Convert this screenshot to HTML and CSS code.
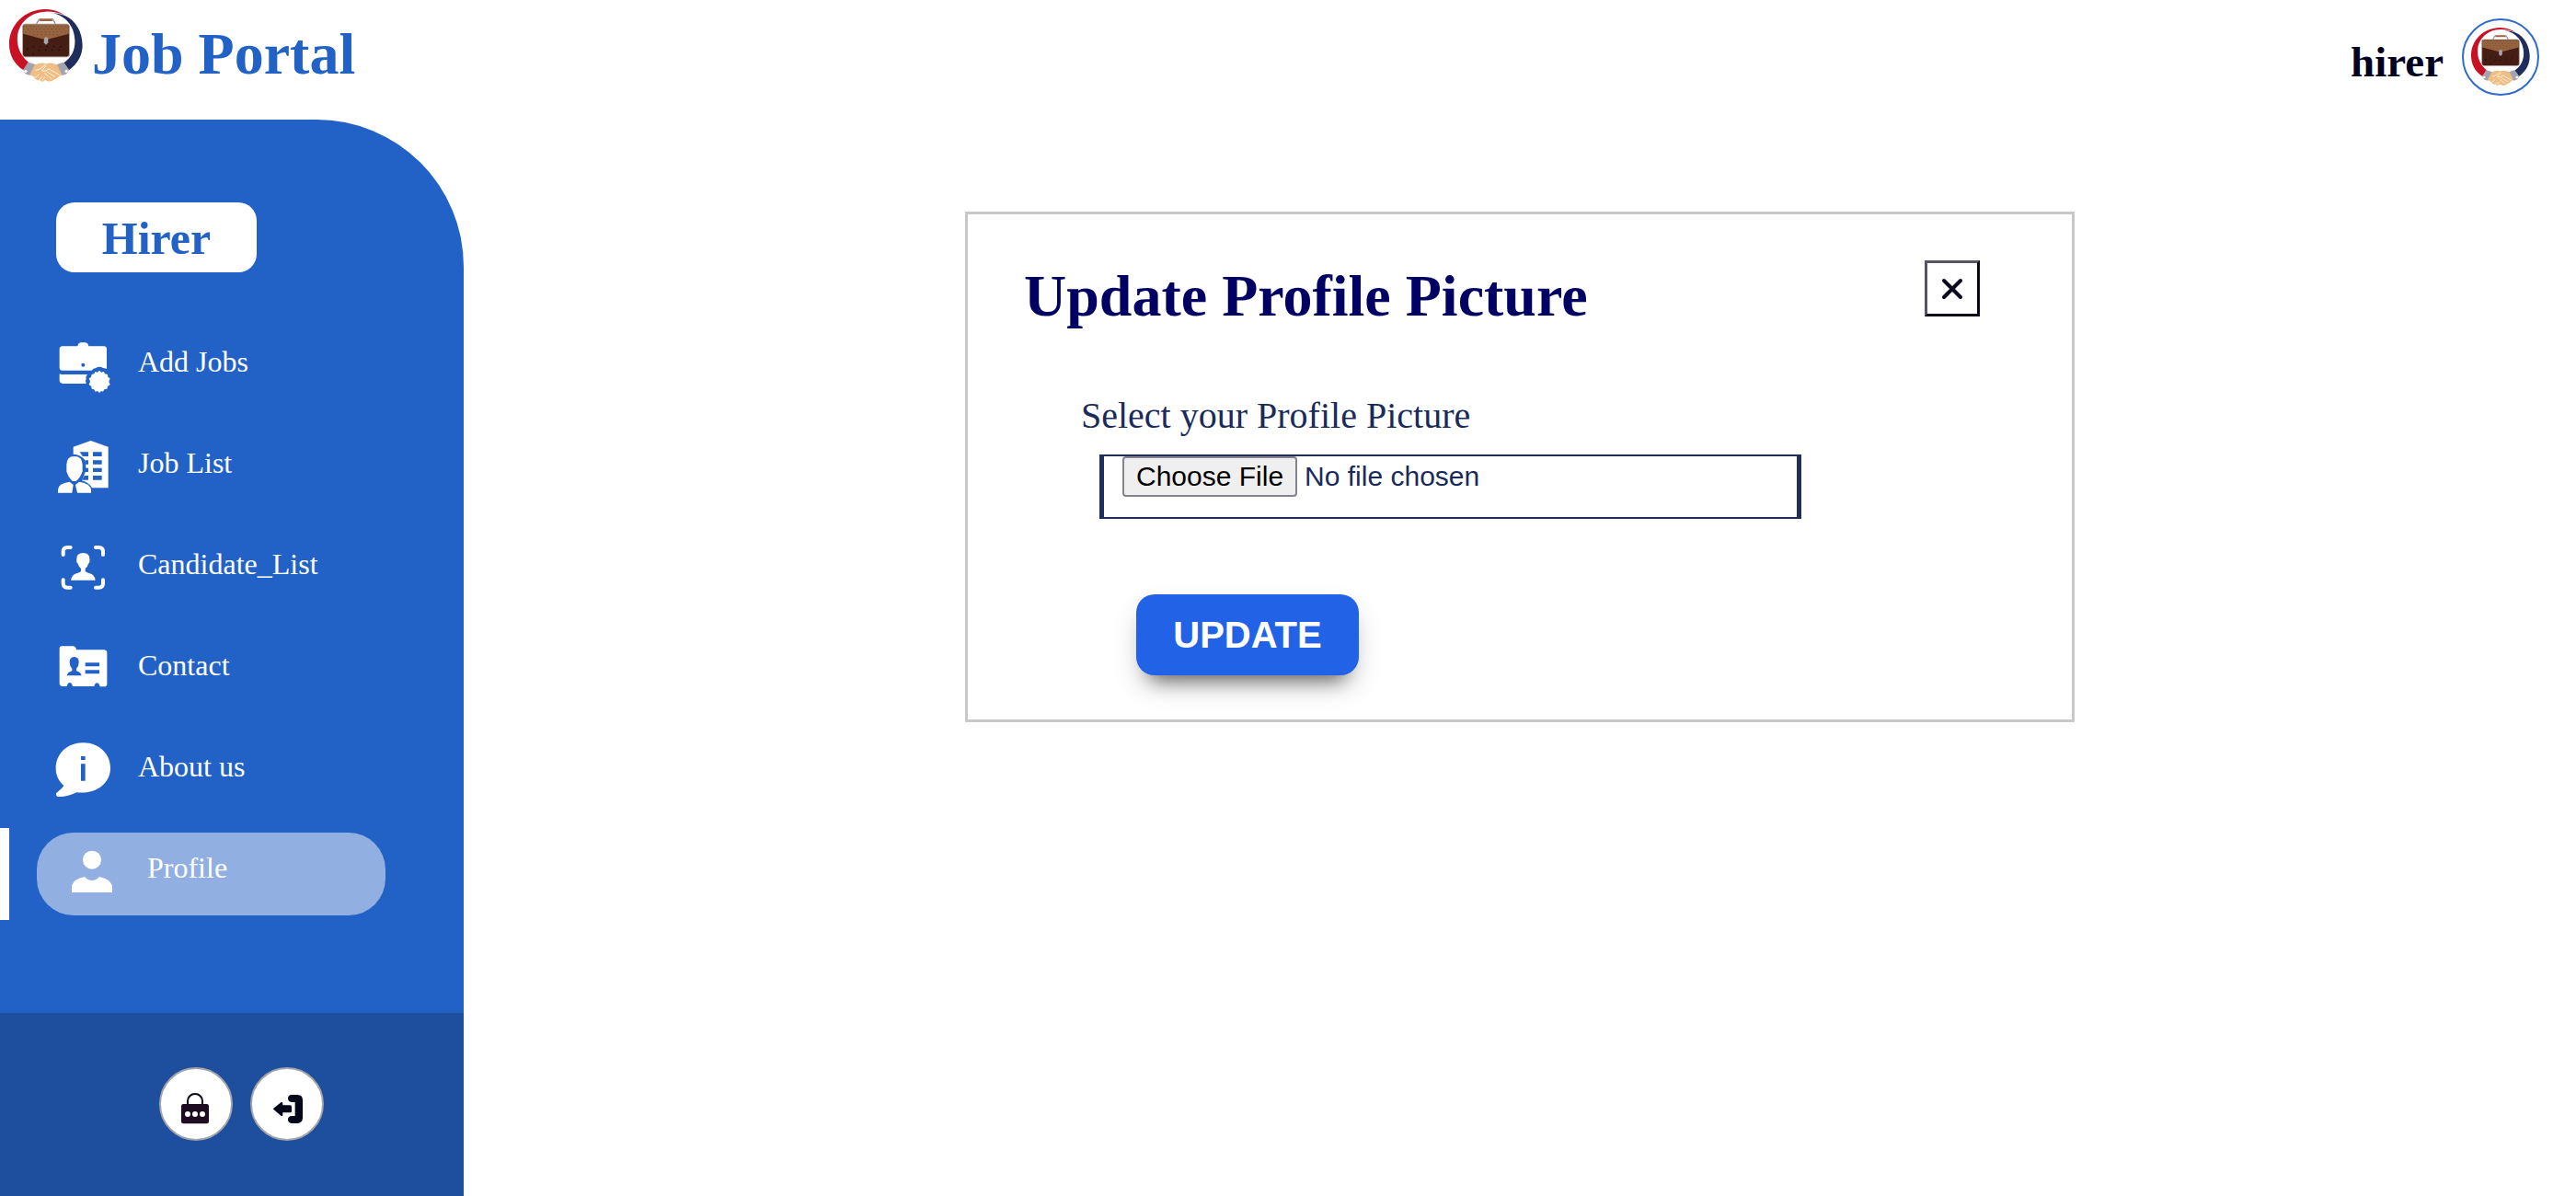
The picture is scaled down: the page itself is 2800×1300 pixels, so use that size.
FILE: index.html
```html
<!DOCTYPE html>
<html lang="en">
<head>
<meta charset="utf-8">
<meta name="viewport" content="width=device-width, initial-scale=1">
<title>Job Portal</title>
<link rel="stylesheet" href="styles.css">
</head>
<body>
<svg class="defs" aria-hidden="true">
  <symbol id="logo" viewBox="30 29 242 242">
    <path fill="#c81124" d="M150 29C80 29 30 82 30 143C30 180 46 208 76 229L94 204C66 182 55 152 57 120C60 75 98 38 150 37Q182 36 212 49Q186 30 150 29Z"/>
    <path fill="#1e2d5c" d="M168 41C215 48 246 86 246 134C246 164 236 186 209 206L227 229C257 207 271 178 271 147C270 104 250 66 213 50Q190 41 168 41Z"/>
    <path fill="#a0623a" d="M131 60H170L173 68H129Z"/>
    <path fill="none" stroke="#8e909c" stroke-width="4" d="M119 79L127 64Q129 61 133 61M183 79L175 64Q173 61 169 61"/>
    <rect x="74" y="78" width="154" height="108" rx="9" fill="#461d13" stroke="#b9aaa8" stroke-width="3"/>
    <path fill="#99633e" d="M83 80H219Q226 81 226 88V110L160 127H141L76 110V88Q76 81 83 80Z"/>
    <g fill="none" stroke="#545052" stroke-width="3" stroke-linecap="round" stroke-dasharray="1 12">
      <path d="M86 86H220M92 95H220M84 104H220M110 113H194"/>
    </g>
    <path fill="none" stroke="#090f20" stroke-width="4" stroke-dasharray="4 18" d="M88 161L112 152H210M108 177L130 163H210"/>
    <path fill="#a6a6ae" d="M145 124L151 120L158 124V139L151 146L144 139Z"/>
    <path fill="#a3a3ad" d="M92 203L119 212L101 246Q82 248 76 229Z"/>
    <path fill="#a3a3ad" d="M209 203L183 212L201 246Q220 248 227 229Z"/>
    <circle cx="84" cy="233" r="5" fill="#fff"/><circle cx="218" cy="233" r="5" fill="#fff"/>
    <path fill="#efbd85" d="M98 243L114 212Q134 203 151 208Q169 203 188 212L203 243Q190 256 174 263Q161 271 149 262Q137 273 130 262Q116 264 113 253Z"/>
    <path fill="none" stroke="#fff5d9" stroke-width="3" d="M117 230L132 225L151 211M151 216L137 232H151L160 225L195 245M153 234L181 251M145 239L170 259M138 251L129 262M128 243L115 254M147 251L139 264"/>
  </symbol>
</svg>

<header class="topbar">
  <a class="brand" href="#">
    <svg class="brand-logo" aria-hidden="true"><use href="#logo"/></svg>
    <span>Job Portal</span>
  </a>
  <a class="account" href="#">
    <span>hirer</span>
    <span class="avatar"><svg aria-hidden="true"><use href="#logo"/></svg></span>
  </a>
</header>

<div class="layout">
  <aside class="sidebar">
    <h2 class="role">Hirer</h2>
    <nav>
      <ul class="menu">
        <li><a href="#">
          <svg viewBox="60 57 180 180" aria-hidden="true">
            <path d="M83 79H133Q135 67 145 67H157Q167 67 169 79H219Q228 80 228 88V153Q221 150 216 150Q211 146 204 146Q197 146 193 150Q184 150 179 158H83Q74 157 74 149V88Q74 80 83 79Z"/>
            <path d="M74 169Q78 171 83 171H165Q158 180 161 186Q157 192 161 201H85Q74 200 74 190Z"/>
            <path d="M204 158L210 164L219 162L222 169L231 171L232 180L239 184L235 194L239 204L231 210L229 218L220 220L216 227L210 225L204 231L198 225L191 227L187 220L179 218L178 210L170 204L174 194L170 184L177 180L179 171L187 169L190 162L198 164Z"/>
            <circle class="cut" cx="151" cy="140" r="6"/>
          </svg><span>Add Jobs</span></a></li>
        <li><a href="#">
          <svg viewBox="60 387 180 180" aria-hidden="true">
            <path d="M119 407L176 387L233 407V541H180Q172 527 155 520L147 517L160 485Q161 463 157 451Q143 431 119 431Z"/>
            <path class="cut" d="M140 424H168V438H150ZM183 424H212V438H183ZM157 451H168V464H159ZM183 451H212V464H183ZM159 476H168V489H156ZM183 476H212V489H183ZM155 501H168V515H147ZM183 501H212V515H183Z"/>
            <path d="M122 438Q149 438 149 466V487Q141 510 128 519H117Q102 507 97 487V466Q97 438 122 438Z"/>
            <path d="M69 557V547Q69 526 107 521L119 531L115 557ZM132 557L126 531L138 521Q176 527 177 548V557Z"/>
          </svg><span>Job List</span></a></li>
        <li><a href="#">
          <svg viewBox="60 87 180 180" aria-hidden="true">
            <path class="stroke" d="M86 129V119Q86 105 100 105H110M192 105H202Q216 105 216 119V129M216 211V222Q216 236 202 236H192M110 236H100Q86 236 86 222V211"/>
            <path d="M151 123Q173 124 172 143Q174 154 168 158Q166 168 158 174V183Q162 187 173 190Q189 195 191 212H111Q114 195 129 190Q141 187 144 183V174Q137 168 134 158Q128 154 130 143Q129 124 151 123Z"/>
          </svg><span>Candidate_List</span></a></li>
        <li><a href="#">
          <svg viewBox="60 420 180 180" aria-hidden="true">
            <path d="M80 430H117Q128 431 129 442H220Q229 444 229 451V554Q228 562 220 562H206Q203 550 196 550Q190 550 187 561H117Q114 549 107 549Q101 549 98 561H84Q74 560 74 551V437Q74 431 80 430Z"/>
            <path class="cut" d="M122 465Q138 466 137 483Q137 495 129 503V511Q143 514 146 526H98Q101 514 115 511V503Q107 495 107 483Q106 466 122 465ZM158 484H204V496H158ZM158 508H204V520H158Z"/>
          </svg><span>Contact</span></a></li>
        <li><a href="#">
          <svg viewBox="180 87 180 180" aria-hidden="true">
            <path d="M271 82C325 82 360 120 360 164C360 216 312 250 250 244Q218 260 188 258Q182 255 183 247L201 231L208 222C192 207 182 190 182 166C182 119 219 82 271 82Z"/>
            <path class="cut" d="M264 126H278V138H264ZM264 151H278V206H264Z"/>
          </svg><span>About us</span></a></li>
        <li class="active"><a href="#" aria-current="page">
          <svg viewBox="210 417 180 180" aria-hidden="true">
            <circle cx="300" cy="464" r="30"/>
            <path d="M234 570V548Q241 526 276 519Q287 531 300 531Q313 531 324 519Q358 526 366 548V570Z"/>
          </svg><span>Profile</span></a></li>
      </ul>
    </nav>
    <div class="actions">
      <button type="button" aria-label="Change password">
        <svg viewBox="99 90 240 240" aria-hidden="true">
          <path fill="none" stroke="#090512" stroke-width="6" d="M192 212V199A24 22 0 0 1 240 199V212"/>
          <rect x="171" y="210" width="90" height="64" rx="7" fill="#1c0e20"/>
          <g fill="#fff"><circle cx="192" cy="243" r="9"/><circle cx="216" cy="243" r="9"/><circle cx="240" cy="243" r="9"/></g>
        </svg>
      </button>
      <button type="button" aria-label="Log out">
        <svg viewBox="396 90 240 240" aria-hidden="true">
          <path fill="#05061a" d="M470 226L496 205Q502 202 502 209V214H526Q531 215 531 219V234Q531 238 526 238H502V245Q502 251 496 248Z"/>
          <path fill="#05061a" d="M531 180H550Q567 181 567 197V256Q566 272 550 273H531Q519 272 519 261Q519 250 531 249H542V204H531Q519 203 519 192Q519 181 531 180Z"/>
        </svg>
      </button>
    </div>
  </aside>

  <main class="content">
    <section class="dialog" aria-labelledby="dialog-title">
      <div class="dialog-head">
        <h1 id="dialog-title">Update Profile Picture</h1>
        <button class="close" type="button" aria-label="Close">
          <svg viewBox="0 0 20 20" aria-hidden="true"><path d="M1 1L19 19M19 1L1 19"/></svg>
        </button>
      </div>
      <form class="dialog-form">
        <label for="picture">Select your Profile Picture</label>
        <input id="picture" type="file">
        <button class="update" type="submit">UPDATE</button>
      </form>
    </section>
  </main>
</div>
</body>
</html>
```

FILE: styles.css
```css
* {
  box-sizing: border-box;
}

body {
  margin: 0;
  min-height: 100vh;
  display: flex;
  flex-direction: column;
  background: #fff;
  font-family: "Liberation Serif", "Times New Roman", serif;
}

a {
  color: inherit;
  text-decoration: none;
}

button {
  padding: 0;
  cursor: pointer;
}

svg {
  display: block;
  flex: none;
  overflow: visible;
}

.defs {
  position: absolute;
  width: 0;
  height: 0;
}

.topbar {
  display: flex;
  justify-content: space-between;
  align-items: flex-start;
  height: 130px;
  padding: 10px 40px 0 10px;
}

.brand {
  display: flex;
  gap: 10px;
  color: #2262c6;
  font-size: 64px;
  font-weight: bold;
  line-height: 98px;
}

.brand-logo {
  width: 80px;
  height: 80px;
}

.account {
  display: flex;
  gap: 20px;
  padding-top: 10px;
  color: #000020;
  font-size: 47px;
  font-weight: bold;
  line-height: 94px;
}

.avatar {
  display: grid;
  place-items: center;
  width: 84px;
  height: 84px;
  border: 2px solid #2f6cc9;
  border-radius: 50%;
}

.avatar svg {
  width: 64px;
  height: 64px;
}

.layout {
  flex: 1;
  display: flex;
}

.sidebar {
  flex: none;
  display: flex;
  flex-direction: column;
  width: 504px;
  padding-top: 90px;
  background: #2262c6;
  border-top-right-radius: 160px;
}

.role {
  width: 218px;
  height: 76px;
  margin: 0 0 54px 61px;
  border-radius: 20px;
  background: #fff;
  color: #2262c6;
  font-size: 50px;
  line-height: 78px;
  text-align: center;
}

.menu {
  display: flex;
  flex-direction: column;
  gap: 10px;
  margin: 0;
  padding: 0;
  list-style: none;
}

.menu li {
  padding: 5px 85px 5px 30px;
  border-left: 10px solid transparent;
}

.menu a {
  display: flex;
  gap: 30px;
  height: 90px;
  padding: 14px 20px;
  border-radius: 40px;
  color: #fff;
  font-size: 32px;
  line-height: 48px;
}

.menu svg {
  width: 60px;
  height: 60px;
  fill: #fff;
}

.menu .cut {
  fill: #2262c6;
}

.menu .stroke {
  fill: none;
  stroke: #fff;
  stroke-width: 12px;
  stroke-linecap: round;
}

.menu .active {
  border-left-color: #fff;
}

.menu .active a {
  padding-left: 30px;
  background: #91b0e1;
}

.actions {
  display: flex;
  gap: 19px;
  height: 199px;
  margin-top: auto;
  padding: 59px 0 0 173px;
  background: #1d4f9e;
}

.actions button {
  width: 80px;
  height: 80px;
  border: 2px solid #a3a3aa;
  border-radius: 50%;
  background: #fff;
}

.actions svg {
  width: 80px;
  height: 80px;
  margin: -2px;
}

.content {
  flex: 1;
  padding: 100px 20px;
}

.dialog {
  width: 1206px;
  max-width: 100%;
  margin: 0 auto;
  padding: 50px 100px 48px 61px;
  border: 3px solid #c8c8c8;
}

.dialog-head {
  display: flex;
  justify-content: space-between;
  align-items: flex-start;
}

.dialog h1 {
  margin: 0;
  color: #000064;
  font-size: 64px;
  line-height: 77px;
}

.close {
  display: grid;
  place-items: center;
  width: 60px;
  height: 61px;
  border: 3px solid #08081a;
  border-top-color: #565564;
  border-left-color: #565564;
  background: #fff;
}

.close svg {
  width: 20px;
  height: 20px;
  fill: none;
  stroke: #0a0a1c;
  stroke-width: 4px;
  stroke-linecap: round;
}

.dialog-form {
  display: flex;
  flex-direction: column;
  align-items: flex-start;
  padding: 68px 0 0 62px;
}

.dialog-form label {
  color: #1a2a5a;
  font-size: 40px;
  line-height: 48px;
}

.dialog-form input {
  width: 763px;
  max-width: 100%;
  height: 70px;
  margin: 18px 0 0 20px;
  padding: 0 20px;
  border: solid #1e2f5f;
  border-width: 2px 5px;
  color: #1a2a5a;
  font: 30px "Liberation Sans", Arial, sans-serif;
}

.dialog-form input::file-selector-button {
  margin-right: 8px;
  padding: 3px 13px;
  border: 2px solid #85838f;
  border-radius: 4px;
  background: #efefef;
  color: #000;
  font: inherit;
}

.update {
  width: 242px;
  height: 88px;
  margin: 82px 0 0 60px;
  border: 0;
  border-radius: 20px;
  background: #2262e6;
  box-shadow: 0 20px 20px -16px #00000080, 0 14px 32px -8px #0000004d;
  color: #fff;
  font: bold 40px "Liberation Sans", Arial, sans-serif;
}
```
